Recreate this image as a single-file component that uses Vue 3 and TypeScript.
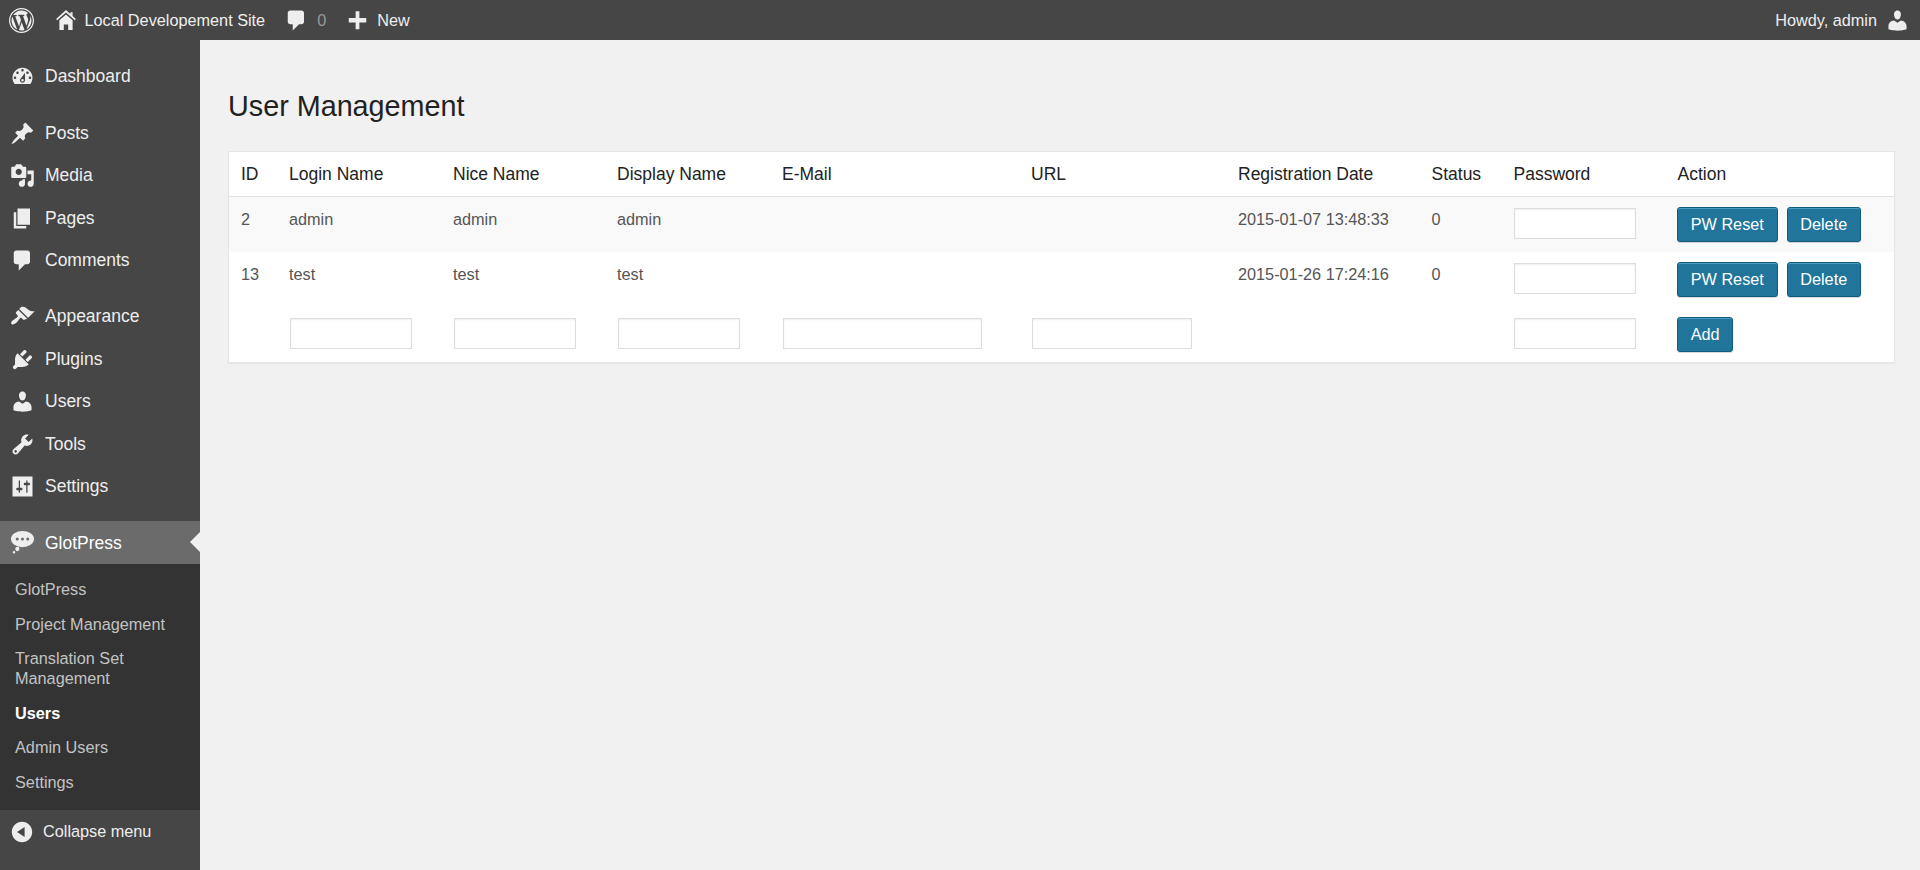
<script setup lang="ts">
interface MenuItem { label: string; icon: string }
const icons: Record<string, string> = {
  dashboard: 'M3.76 16h12.48c1.1-1.37 1.76-3.11 1.76-5 0-4.42-3.58-8-8-8s-8 3.58-8 8c0 1.89.66 3.63 1.76 5zM10 4c.55 0 1 .45 1 1s-.45 1-1 1-1-.45-1-1 .45-1 1-1zM6 6c.55 0 1 .45 1 1s-.45 1-1 1-1-.45-1-1 .45-1 1-1zm8 0c.55 0 1 .45 1 1s-.45 1-1 1-1-.45-1-1 .45-1 1-1zm-5.37 5.55L12 7v6c0 1.1-.9 2-2 2s-2-.9-2-2c0-.57.24-1.08.63-1.45zM4 10c.55 0 1 .45 1 1s-.45 1-1 1-1-.45-1-1 .45-1 1-1zm12 0c.55 0 1 .45 1 1s-.45 1-1 1-1-.45-1-1 .45-1 1-1zm-5 3c0-.55-.45-1-1-1s-1 .45-1 1 .45 1 1 1 1-.45 1-1z',
  posts: 'M10.44 3.02l1.82-1.82 6.36 6.35-1.83 1.82c-1.05-.68-2.48-.57-3.41.36l-.75.75c-.92.93-1.04 2.35-.35 3.41l-1.83 1.82-2.41-2.41-2.8 2.79c-.42.42-3.38 2.71-3.8 2.29s1.86-3.39 2.28-3.81l2.79-2.79L4.1 9.36l1.83-1.82c1.05.69 2.48.57 3.4-.36l.75-.75c.93-.92 1.05-2.35.36-3.41z',
  media: 'M13 11V4c0-.55-.45-1-1-1h-1.67L9 1H5L3.67 3H2c-.55 0-1 .45-1 1v7c0 .55.45 1 1 1h10c.55 0 1-.45 1-1zM7 4.5c1.38 0 2.5 1.12 2.5 2.5S8.38 9.5 7 9.5 4.5 8.38 4.5 7 5.62 4.5 7 4.5zM14 6h5v10.5c0 1.38-1.12 2.5-2.5 2.5S14 17.88 14 16.5s1.12-2.5 2.5-2.5c.17 0 .34.02.5.05V9h-3V6zm-4 8.05V13h2v3.5c0 1.38-1.12 2.5-2.5 2.5S7 17.88 7 16.5 8.12 14 9.5 14c.17 0 .34.02.5.05z',
  pages: 'M6 15V2h10v13H6zm-1 1h8v2H3V5h2v11z',
  comments: 'M5 2h9c1.1 0 2 .9 2 2v7c0 1.1-.9 2-2 2h-2l-5 5v-5H5c-1.1 0-2-.9-2-2V4c0-1.1.9-2 2-2z',
  appearance: 'M14.48 11.06L7.41 3.99l1.5-1.5c.5-.56 2.3-.47 3.51.32 1.21.8 1.43 1.28 2.91 2.1 1.18.64 2.45 1.26 4.45.85zm-.71.71L6.7 4.7 4.93 6.47c-.39.39-.39 1.02 0 1.41l1.06 1.06c.39.39.39 1.03 0 1.42-.6.6-1.43 1.11-2.21 1.69-.35.26-.7.53-1.01.84C1.43 13.23.4 15.25 1.25 16.1s2.87-.18 4.21-1.52c.31-.31.58-.66.84-1.01.58-.78 1.09-1.61 1.69-2.21.39-.39 1.02-.39 1.41 0l1.06 1.06c.39.39 1.02.39 1.41 0z',
  plugins: 'M13.11 4.36L9.87 7.6 8 5.73l3.24-3.24c.35-.34 1.05-.2 1.56.32.52.51.66 1.21.31 1.55zm-8 1.77l.91-1.12 9.01 9.01-1.19.84c-.71.71-2.63 1.16-3.82 1.16H6.14L4.9 17.26c-.59.59-1.54.59-2.12 0-.59-.58-.59-1.53 0-2.12l1.24-1.24v-3.88c0-1.13.4-3.19 1.09-3.89zm7.26 3.97l3.24-3.24c.34-.35 1.04-.21 1.55.31.52.51.66 1.21.31 1.55l-3.24 3.25z',
  users: 'M10 9.25c-2.27 0-2.73-3.44-2.73-3.44C7 4.02 7.82 2 9.97 2c2.16 0 2.98 2.02 2.71 3.81 0 0-.41 3.44-2.68 3.44zm0 2.57L12.72 10c2.39 0 4.52 2.33 4.52 4.53v2.49s-3.65 1.13-7.24 1.13c-3.65 0-7.24-1.13-7.24-1.13v-2.49c0-2.25 1.94-4.48 4.47-4.48z',
  tools: 'M16.68 9.77c-1.34 1.34-3.3 1.67-4.95.99l-5.41 6.52c-.99.99-2.59.99-3.58 0s-.99-2.59 0-3.57l6.52-5.42c-.68-1.65-.35-3.61.99-4.95 1.28-1.28 3.12-1.62 4.72-1.06l-2.89 2.89 2.82 2.82 2.86-2.87c.53 1.58.18 3.39-1.08 4.65zM3.81 16.21c.4.39 1.04.39 1.43 0 .4-.4.4-1.04 0-1.43-.39-.4-1.03-.4-1.43 0-.39.39-.39 1.03 0 1.43z',
  settings: 'M2 2h16v16H2zM8 11h1c.55 0 1 .45 1 1s-.45 1-1 1H8v1.5c0 .28-.22.5-.5.5s-.5-.22-.5-.5V13H6c-.55 0-1-.45-1-1s.45-1 1-1h1V5.5c0-.28.22-.5.5-.5s.5.22.5.5V11zm5-2h-1c-.55 0-1-.45-1-1s.45-1 1-1h1V5.5c0-.28.22-.5.5-.5s.5.22.5.5V7h1c.55 0 1 .45 1 1s-.45 1-1 1h-1v5.5c0 .28-.22.5-.5.5s-.5-.22-.5-.5V9z',
  glot: 'M.8 7.2a9.200 6.500 0 1 1 18.400 0a9.200 6.500 0 1 1-18.400 0zM4.600 7.200a1.200 1.200 0 1 0 2.400 0a1.200 1.200 0 1 0-2.400 0zM8.800 7.200a1.200 1.200 0 1 0 2.400 0a1.200 1.200 0 1 0-2.400 0zM13 7.200a1.200 1.200 0 1 0 2.400 0a1.200 1.200 0 1 0-2.400 0zM4.200 15.200a1.700 1.700 0 1 0 3.400 0a1.700 1.700 0 1 0-3.400 0zM2.200 17.800a1 1 0 1 0 2 0a1 1 0 1 0-2 0z',
  collapse: 'M10 2.160c4.330 0 7.840 3.510 7.840 7.840s-3.510 7.840-7.840 7.840S2.160 14.330 2.160 10 5.710 2.160 10 2.160zm2 11.720V6.120L6.180 9.970z',
  home: 'M10 1l4 3.600V3h2v3.400L19 9l-1 1.200-8-7-8 7L1 9zM10 5l6 5.200V19h-4v-5H8v5H4v-8.800z',
  plus: 'M17 8v3.500h-5.500V17h-3v-5.500H3V8h5.500V2.500h3V8z',
  wp: 'M20 10c0-5.520-4.480-10-10-10S0 4.480 0 10s4.480 10 10 10 10-4.480 10-10zM10 1.010c4.970 0 8.990 4.020 8.990 8.990s-4.020 8.990-8.990 8.990S1.010 14.970 1.010 10 5.030 1.010 10 1.010zM8.010 14.820L4.960 6.610c.49-.03 1.050-.08 1.050-.08.43-.05.38-1.010-.06-.99 0 0-1.290.1-2.130.1-.15 0-.33 0-.52-.01 1.440-2.170 3.900-3.600 6.700-3.600 2.090 0 3.990.79 5.410 2.090-.6-.08-1.450.35-1.450 1.420 0 .66.38 1.220.79 1.880.31.54.5 1.220.5 2.210 0 1.340-1.270 4.480-1.270 4.480l-2.710-7.500c.48-.03.75-.16.75-.16.43-.05.38-1.100-.05-1.080 0 0-1.300.11-2.140.11-.78 0-2.110-.11-2.110-.11-.43-.02-.48 1.060-.05 1.080l.84.08 1.120 3.040zm6.020 2.150L16.640 10s.67-1.690.39-3.810c.63 1.140.94 2.420.94 3.810 0 2.960-1.560 5.580-3.940 6.970zM2.680 6.770L6.500 17.250c-2.670-1.300-4.470-4.080-4.470-7.250 0-1.160.2-2.230.65-3.230zm7.450 4.530l2.290 6.250c-.75.27-1.570.42-2.420.42-.72 0-1.410-.11-2.060-.3z',
}
const groups: MenuItem[][] = [
  [{ label: 'Dashboard', icon: 'dashboard' }],
  [
    { label: 'Posts', icon: 'posts' },
    { label: 'Media', icon: 'media' },
    { label: 'Pages', icon: 'pages' },
    { label: 'Comments', icon: 'comments' },
  ],
  [
    { label: 'Appearance', icon: 'appearance' },
    { label: 'Plugins', icon: 'plugins' },
    { label: 'Users', icon: 'users' },
    { label: 'Tools', icon: 'tools' },
    { label: 'Settings', icon: 'settings' },
  ],
]
const subs = ['GlotPress', 'Project Management', 'Translation Set Management', 'Users', 'Admin Users', 'Settings']
const columns = ['ID', 'Login Name', 'Nice Name', 'Display Name', 'E-Mail', 'URL', 'Registration Date', 'Status', 'Password', 'Action']
const widths = [50, 164, 164, 165, 249, 207, 194, 82, 164, 226]
const rows = [
  { id: '2', name: 'admin', date: '2015-01-07 13:48:33' },
  { id: '13', name: 'test', date: '2015-01-26 17:24:16' },
]
</script>

<template>
  <div class="page">
    <header class="bar">
      <div class="bar-left">
        <svg class="ico wp" viewBox="0 0 20 20"><path :d="icons.wp" fill-rule="evenodd" /></svg>
        <span class="bar-item site"><svg class="ico home" viewBox="0 0 20 20"><path :d="icons.home" /></svg>Local Developement Site</span>
        <span class="bar-item cm"><svg class="ico" viewBox="0 0 20 20"><path :d="icons.comments" /></svg><span class="count">0</span></span>
        <span class="bar-item new"><svg class="ico" viewBox="0 0 20 20"><path :d="icons.plus" /></svg>New</span>
      </div>
      <span class="bar-item howdy">Howdy, admin<svg class="ico" viewBox="0 0 20 20"><path :d="icons.users" /></svg></span>
    </header>
    <div class="body">
      <aside class="side">
        <nav class="groups">
          <ul v-for="(g, i) in groups" :key="i" class="group">
            <li v-for="m in g" :key="m.label" class="item">
              <svg class="mi" viewBox="0 0 20 20"><path :d="icons[m.icon]" fill-rule="evenodd" /></svg>{{ m.label }}
            </li>
          </ul>
        </nav>
        <div class="item current">
          <svg class="mi" viewBox="0 0 20 20"><path :d="icons.glot" fill-rule="evenodd" /></svg><span class="cur-label">GlotPress</span>
          <span class="notch"></span>
        </div>
        <ul class="subs">
          <li v-for="s in subs" :key="s" :class="{ on: s === 'Users' }">{{ s }}</li>
        </ul>
        <div class="collapse"><svg class="ci" viewBox="0 0 20 20"><path :d="icons.collapse" fill-rule="evenodd" /></svg>Collapse menu</div>
      </aside>
      <main class="main">
        <h2 class="title">User Management</h2>
        <table class="tbl">
          <colgroup><col v-for="(w, i) in widths" :key="i" :style="{ width: w + 'px' }" /></colgroup>
          <thead><tr><th v-for="c in columns" :key="c">{{ c }}</th></tr></thead>
          <tbody>
            <tr v-for="(r, i) in rows" :key="r.id" :class="{ alt: i === 0 }">
              <td>{{ r.id }}</td><td>{{ r.name }}</td><td>{{ r.name }}</td><td>{{ r.name }}</td>
              <td></td><td></td><td>{{ r.date }}</td><td>0</td>
              <td><input class="inp pw" type="text" /></td>
              <td class="acts"><button class="btn">PW Reset</button><button class="btn">Delete</button></td>
            </tr>
            <tr>
              <td></td>
              <td><input class="inp" type="text" /></td>
              <td><input class="inp" type="text" /></td>
              <td><input class="inp" type="text" /></td>
              <td><input class="inp wide" type="text" /></td>
              <td><input class="inp url" type="text" /></td>
              <td></td><td></td>
              <td><input class="inp pw" type="text" /></td>
              <td class="acts"><button class="btn">Add</button></td>
            </tr>
          </tbody>
        </table>
      </main>
    </div>
  </div>
</template>

<style>
html, body { margin: 0; background: #f1f1f1; }
</style>

<style scoped>
.page { width: 1920px; height: 870px; overflow: hidden; font-family: "Liberation Sans", Arial, sans-serif; background: #f1f1f1; display: flex; flex-direction: column; }
.bar { height: 40px; flex: none; background: #464646; color: #eee; font-size: 16.25px; display: flex; justify-content: space-between; align-items: center; }
.bar-left { display: flex; align-items: center; }
.ico { width: 25px; height: 25px; fill: #eee; flex: none; display: block; }
.wp { margin-left: 9px; }
.ico.home { width: 22px; height: 22px; }
.bar-item { display: flex; align-items: center; }
.site { margin-left: 21px; gap: 7.5px; }
.cm { margin-left: 19px; gap: 8px; }
.count { color: #999; }
.new { margin-left: 19px; gap: 7px; }
.howdy { margin-right: 10.5px; gap: 7.5px; }
.body { flex: 1; display: flex; min-height: 0; }
.side { width: 200px; flex: none; background: #464646; color: #eee; font-size: 17.5px; }
.groups { padding-top: 15.5px; }
.group { list-style: none; margin: 0 0 14px; padding: 0; }
.group:nth-child(2) { margin-bottom: 13.5px; }
.group:nth-child(3) { margin-bottom: 13px; }
.item { height: 42.5px; display: flex; align-items: center; box-sizing: border-box; padding-left: 10px; position: relative; }
.mi { width: 25px; height: 25px; fill: #eee; margin-right: 10px; flex: none; display: block; }
.current { background: #6b6b6b; color: #fff; height: 43px; }
.cur-label { position: relative; top: 1px; }
.notch { position: absolute; right: 0; top: 50%; margin-top: -10.500px; border: 10.500px solid transparent; border-right: 10px solid #f1f1f1; border-left: 0; }
.subs { list-style: none; margin: 0; padding: 8px 0 10.5px; background: #333; color: #c3c3c3; font-size: 16.25px; }
.subs li { padding: 7.25px 15px; width: 160px; line-height: 20px; }
.subs .on { color: #fff; font-weight: 700; }
.collapse { display: flex; align-items: center; height: 42px; padding-left: 9px; padding-top: 2px; box-sizing: border-box; font-size: 16.25px; color: #eee; }
.ci { width: 26px; height: 26px; fill: #eee; margin-right: 8px; flex: none; display: block; }
.main { flex: 1; padding: 0 25px 0 28px; min-width: 0; }
.title { margin: 48px 0 0; font-size: 28.75px; font-weight: 400; line-height: 36px; color: #222; }
.tbl { margin-top: 27px; width: 1667px; table-layout: fixed; border-collapse: separate; border-spacing: 0; background: #fff; border: 1px solid #e5e5e5; box-shadow: 0 1px 1px rgba(0, 0, 0, .04); font-size: 16.25px; color: #555; }
.tbl th { height: 45px; box-sizing: border-box; padding: 0 10px 0 12px; text-align: left; font-weight: 400; color: #222; border-bottom: 1px solid #e1e1e1; font-size: 17.5px; }
.tbl td { height: 55px; box-sizing: border-box; padding: 13px 0 0 12px; vertical-align: top; }
.tbl th:nth-child(n+2) { padding-left: 10px; }
.tbl td:nth-child(n+2) { padding-left: 10px; }
.tbl th:nth-child(n+8), .tbl td:nth-child(8) { padding-left: 9.5px; }
.alt td { background: #f9f9f9; }
.tbl td:has(.inp) { padding-top: 11px; }
.inp { display: block; box-sizing: border-box; width: 122px; height: 31px; margin: 0 0 0 1px; padding: 0; border: 1px solid #ddd; background: #fff; box-shadow: inset 0 1px 2px rgba(0, 0, 0, .07); }
.wide { width: 199px; }
.url { width: 160px; }
.pw { width: 122px; margin-left: 0; }
.tbl td.acts { padding-top: 10px; white-space: nowrap; }
.btn { height: 35px; padding: 0 12.7px; border: 1px solid #0f5c7f; border-radius: 3px; background: #21759b; color: #fff; font: 400 16.25px "Liberation Sans", Arial, sans-serif; box-shadow: inset 0 1px 0 rgba(120, 200, 230, .5), 0 1px 0 rgba(0, 0, 0, .15); margin-left: -1px; margin-right: 10px; }
</style>
